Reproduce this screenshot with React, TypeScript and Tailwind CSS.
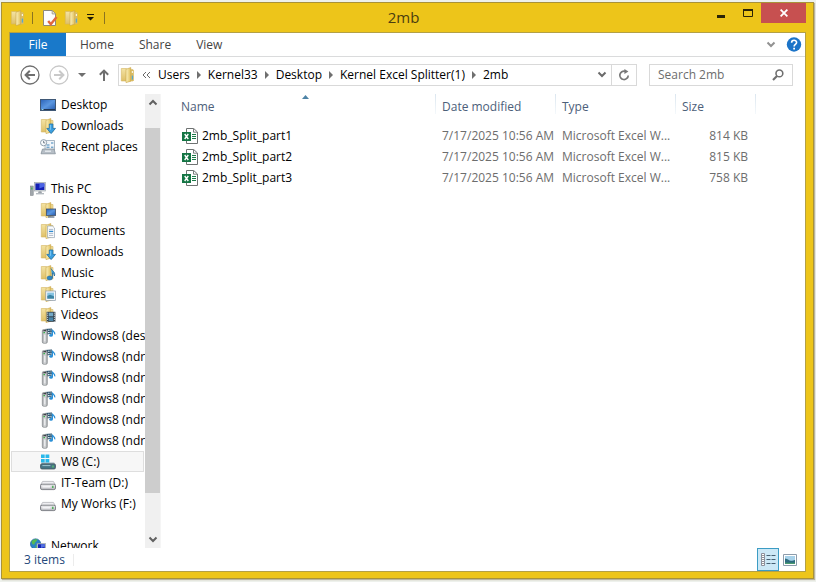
import React from "react";

type IconProps = { className?: string };

// Shared gradients, referenced by id from the icons below
const IconDefs = () => (
  <svg className="absolute h-0 w-0" aria-hidden="true">
    <defs>
      <linearGradient id="folderBack" x1="0" y1="0" x2="0" y2="1">
        <stop offset="0" stopColor="#f3e3a4" />
        <stop offset="1" stopColor="#dfc067" />
      </linearGradient>
      <linearGradient id="folderFront" x1="0" y1="0" x2="1" y2="0">
        <stop offset="0" stopColor="#fcf2bd" />
        <stop offset="1" stopColor="#e0bf5c" />
      </linearGradient>
      <linearGradient id="screenBlue" x1="0" y1="0" x2="1" y2="1">
        <stop offset="0" stopColor="#2a62b8" />
        <stop offset="0.5" stopColor="#5b97e0" />
        <stop offset="1" stopColor="#2458ac" />
      </linearGradient>
      <linearGradient id="driveBody" x1="0" y1="0" x2="0" y2="1">
        <stop offset="0" stopColor="#f4f4f6" />
        <stop offset="1" stopColor="#b4b5ba" />
      </linearGradient>
      <linearGradient id="tower" x1="0" y1="0" x2="1" y2="0">
        <stop offset="0" stopColor="#a0a3a6" />
        <stop offset="0.5" stopColor="#dcdee0" />
        <stop offset="1" stopColor="#a0a3a6" />
      </linearGradient>
    </defs>
  </svg>
);

const Svg = ({ className = "", children }: IconProps & { children: React.ReactNode }) => (
  <svg viewBox="0 0 16 16" aria-hidden="true" className={`h-4 w-4 shrink-0 ${className}`}>
    {children}
  </svg>
);

const Folder = ({ className, children }: IconProps & { children?: React.ReactNode }) => (
  <Svg className={className}>
    <path d="M1.300 1.500h5l1 1H13v11.500H1.300z" fill="url(#folderBack)" stroke="#d3b662" strokeWidth=".6" />
    <path d="M6 2.200 10.800.6v13.600L6 15.600z" fill="url(#folderFront)" stroke="#c9a548" strokeWidth=".6" />
    {children}
  </Svg>
);

const PlainFolder = ({ className }: IconProps) => (
  <Folder className={className}>
    <path d="M10.900 3h2.800v11h-2.800z" fill="#d9bb62" />
    <path d="M12.400 8.600v4" stroke="#5aa8c8" strokeWidth="1.300" />
    <path d="M12.400 4v2" stroke="#f8f3dc" strokeWidth="1.200" />
  </Folder>
);

const DownloadsIcon = () => (
  <Folder>
    <path d="M9.3 6h3.6v4.4h2.6L11.1 15.6 6.8 10.4h2.5z" fill="#3b9fe0" stroke="#1c6fa8" strokeWidth=".8" />
    <path d="M10.4 6.8v5" stroke="#7cc8f4" />
  </Folder>
);

const FolderDesktopIcon = () => (
  <Folder>
    <rect x="6.4" y="7" width="9.2" height="6.4" fill="url(#screenBlue)" stroke="#40516b" strokeWidth=".8" />
    <path d="M8 15h6.4" stroke="#54677f" strokeWidth="1.2" />
  </Folder>
);

const DocumentsIcon = () => (
  <Folder>
    <path d="M7.6 3h4.8l2.1 2v9.6H7.6z" fill="#fafcfe" stroke="#94a4b4" strokeWidth=".7" />
    <path d="M9 6.4h4.2M9 10.4h4.2M9 12.4h4.2" stroke="#9aabbc" strokeWidth=".8" />
    <path d="M9 8.4h4.2" stroke="#2d8ad0" strokeWidth="1.3" />
  </Folder>
);

const MusicIcon = () => (
  <Folder>
    <path d="M11 3.4c.5 2.4 4.8 3 3.4 7.6-.2-1.8-1-2.6-2-3v4.9" fill="#3c9bd4" stroke="#21689c" strokeWidth=".8" />
    <ellipse cx="9.7" cy="13" rx="2.7" ry="2" fill="#2e87c4" stroke="#21689c" strokeWidth=".6" />
  </Folder>
);

const PicturesIcon = () => (
  <Folder>
    <rect x="5.8" y="5" width="9.6" height="9.4" fill="#f6f8fa" stroke="#8b9aa8" strokeWidth=".7" />
    <path d="M7.2 6.6H14v3.6H7.2z" fill="#86c3e2" />
    <path d="M7.2 10 10 8.8l4 1.4v2.6H7.2z" fill="#3b84a4" />
  </Folder>
);

const VideosIcon = () => (
  <Folder>
    <rect x="6.6" y="4.8" width="8.8" height="10" fill="#33414c" />
    <rect x="8.7" y="5.6" width="4.5" height="3.7" fill="#73a9c7" />
    <rect x="8.7" y="10.3" width="4.5" height="3.7" fill="#4986aa" />
    <path d="M7.6 5.6v9M14.4 5.6v9" stroke="#dfe8ee" strokeWidth=".9" strokeDasharray="1.1 1" />
  </Folder>
);

const DesktopIcon = () => (
  <Svg>
    <rect x=".5" y="2.5" width="15" height="11" fill="url(#screenBlue)" stroke="#3f5876" />
    <path d="M1 12.5h14" stroke="#1f3554" />
    <path d="M1.5 12.5h2" stroke="#8fd0f0" />
  </Svg>
);

const RecentIcon = () => (
  <Svg>
    <path d="M5 1.5h9.5V11H5z" fill="#f1f5f9" stroke="#93a4b4" strokeWidth=".8" />
    <path d="M6.5 6h3M6.5 8.2h3M11 4h2.4M11 8.2h2.4" stroke="#3f84b8" />
    <path d="M2.5 10h11.5l1.4 4.8H1z" fill="#b6bec6" stroke="#7d8994" strokeWidth=".7" />
    <path d="M5 12.2h6" stroke="#eef2f5" strokeWidth="1.2" />
    <circle cx="3.6" cy="3.7" r="3.1" fill="#f9fbfd" stroke="#8796a5" strokeWidth=".9" />
    <path d="M3.6 1.8v2.1h1.6" fill="none" stroke="#566472" strokeWidth=".8" />
  </Svg>
);

const ThisPcIcon = () => (
  <Svg>
    <rect x=".4" y="5" width="2.8" height="9.4" fill="#a0a6ab" stroke="#72787e" strokeWidth=".5" />
    <path d="M1.8 6.4v2" stroke="#36b54a" strokeWidth="1.2" />
    <rect x="4.4" y="1.4" width="11" height="8.6" fill="#d5dade" stroke="#a2a9b0" strokeWidth=".7" />
    <rect x="5.4" y="2.4" width="9" height="6.6" fill="#1420b4" />
    <path d="M9.4 2.4h5v3.2l-5 2z" fill="#4a63e6" />
    <path d="M8.6 10.2h2.8l.6 2H8z" fill="#9ba1a8" />
    <path d="M6 12.7h8" stroke="#b4bac0" strokeWidth="1.4" />
  </Svg>
);

const MediaDeviceIcon = () => (
  <Svg>
    <path d="M4.6 1 12 .4v5.200l-5 .8z" fill="#27506c" />
    <path d="M8 2.200h1.6M10.4 2h1.2M8 4.600h1.6M10.4 4.400h1.2" stroke="#d9e9f2" strokeWidth="1.1" />
    <rect x="2.300" y="1.500" width="5" height="13.800" rx="1.4" fill="url(#tower)" stroke="#85898c" strokeWidth=".7" />
    <path d="M3.4 2.7h2.8" stroke="#2e3338" strokeWidth="1.2" />
    <path d="M3.4 4.7h1.6" stroke="#38b04c" strokeWidth="1.2" />
    <path d="M4.8 7v6" stroke="#f2f3f4" strokeWidth="1" />
    <path d="M12.4 1.600v5.600M12.4 2c.4 1.4 2.8 1.8 2.400 4.400" fill="none" stroke="#2a8fd6" strokeWidth="1.200" />
    <ellipse cx="11" cy="7.400" rx="1.800" ry="1.300" fill="#2a8fd6" />
  </Svg>
);

const DriveIcon = () => (
  <Svg>
    <path d="M2.6 6.4h10.8l2 3.4H.6z" fill="#eeeef1" stroke="#a9aab0" strokeWidth=".7" />
    <rect x=".5" y="9.2" width="15" height="5.4" rx="1.6" fill="url(#driveBody)" stroke="#77797f" strokeWidth=".9" />
    <path d="M2.4 11.8h8" stroke="#f7f7f9" strokeWidth="1.4" />
    <path d="M12.8 10.8v2.2" stroke="#3fa94b" strokeWidth="1.3" />
  </Svg>
);

const SystemDriveIcon = () => (
  <Svg>
    <path d="M2 8h12l1.4 2.6H.6z" fill="#c8d4da" />
    <rect x=".5" y="9.8" width="15" height="5.2" rx="1.5" fill="#477484" stroke="#46565e" strokeWidth=".8" />
    <path d="M2.4 11.6h8" stroke="#9fc4d0" />
    <path d="M13 11.4v2" stroke="#5fd468" strokeWidth="1.2" />
    <path d="M1 .4h3.7v3.7H1zM5.5.4h3.8v3.7H5.5zM1 4.9h3.7v3.7H1zM5.5 4.9h3.8v3.7H5.5z" fill="#28b8ea" />
  </Svg>
);

const NetworkIcon = () => (
  <Svg>
    <circle cx="5.6" cy="6" r="5.2" fill="#2c83c6" stroke="#1d5e93" strokeWidth=".6" />
    <path d="M1.6 3.4C3.4 1.4 6 1 7.4 1.6 7 3.6 4.6 4 4.4 6.4 3 7 1.6 5.4 1.6 3.4M5.6 8l2-1.6v4.2c-1 .6-2 .2-2-2.6" fill="#57bb52" />
    <rect x="7" y="5.4" width="8.6" height="7" fill="#d5dade" stroke="#8a939c" strokeWidth=".6" />
    <rect x="7.9" y="6.2" width="6.9" height="5.2" fill="#1626b4" />
    <path d="M11 6.2h3.8v2.6L11 10z" fill="#5270e2" />
    <path d="M8.4 13.8h6" stroke="#9ba3aa" strokeWidth="1.4" />
  </Svg>
);

const ExcelIcon = () => (
  <Svg>
    <path d="M4.5.5h7.200L15.500 4v11.500h-11z" fill="#fff" stroke="#6e7272" strokeWidth="1" />
    <path d="M11.5.8v3.4h3.6" fill="none" stroke="#6e7272" strokeWidth=".9" />
    <path d="M10 6.500h4M10 8.500h4M10 10.500h4" stroke="#1b7b48" />
    <rect x="0" y="4" width="9" height="9" fill="#147544" />
    <path d="m2.7 6 3.6 5M6.3 6l-3.6 5" stroke="#fff" strokeWidth="1.4" />
  </Svg>
);

const PropertiesIcon = () => (
  <Svg>
    <path d="M1.5.5h8.8l3.2 3.3v11.7h-12z" fill="#fdfdfd" stroke="#8e8a78" />
    <path d="M10.2.6v3.3h3.2" fill="none" stroke="#a09c8a" />
    <path d="m6.2 11 2.6 3.2L14.6 7" fill="none" stroke="#e2683e" strokeWidth="2.4" />
  </Svg>
);

const Chevron = ({ className = "", up = false }: IconProps & { up?: boolean }) => (
  <svg viewBox="0 0 10 7" aria-hidden="true" className={`h-[7px] w-[10px] shrink-0 ${className}`}>
    <path d={up ? "M1.5 5.5 5 2l3.5 3.5" : "M1.5 1.5 5 5l3.5-3.5"} fill="none" stroke="currentColor" strokeWidth="2" />
  </svg>
);

const ArrowCircle = ({ className = "", forward = false }: IconProps & { forward?: boolean }) => (
  <svg viewBox="0 0 20 20" aria-hidden="true" className={`h-5 w-5 ${className}`}>
    <circle cx="10" cy="10" r="9" fill="none" stroke="currentColor" strokeWidth="1.3" />
    <path
      d={forward ? "M5 10h9M10.2 5.8 14.4 10l-4.2 4.2" : "M15 10H6M9.8 5.8 5.6 10l4.2 4.2"}
      fill="none"
      stroke="currentColor"
      strokeWidth="2"
    />
  </svg>
);

type NavItem = { label: string; icon: React.ReactNode; root?: boolean; selected?: boolean };

const navGroups: NavItem[][] = [
  [
    { label: "Desktop", icon: <DesktopIcon /> },
    { label: "Downloads", icon: <DownloadsIcon /> },
    { label: "Recent places", icon: <RecentIcon /> },
  ],
  [
    { label: "This PC", icon: <ThisPcIcon />, root: true },
    { label: "Desktop", icon: <FolderDesktopIcon /> },
    { label: "Documents", icon: <DocumentsIcon /> },
    { label: "Downloads", icon: <DownloadsIcon /> },
    { label: "Music", icon: <MusicIcon /> },
    { label: "Pictures", icon: <PicturesIcon /> },
    { label: "Videos", icon: <VideosIcon /> },
    { label: "Windows8 (desk", icon: <MediaDeviceIcon /> },
    { label: "Windows8 (ndrv", icon: <MediaDeviceIcon /> },
    { label: "Windows8 (ndrv", icon: <MediaDeviceIcon /> },
    { label: "Windows8 (ndrv", icon: <MediaDeviceIcon /> },
    { label: "Windows8 (ndrv", icon: <MediaDeviceIcon /> },
    { label: "Windows8 (ndrv", icon: <MediaDeviceIcon /> },
    { label: "W8 (C:)", icon: <SystemDriveIcon />, selected: true },
    { label: "IT-Team (D:)", icon: <DriveIcon /> },
    { label: "My Works (F:)", icon: <DriveIcon /> },
  ],
  [{ label: "Network", icon: <NetworkIcon />, root: true }],
];

const crumbs = ["Users", "Kernel33", "Desktop", "Kernel Excel Splitter(1)", "2mb"];

const files = [
  { name: "2mb_Split_part1", date: "7/17/2025 10:56 AM", type: "Microsoft Excel W...", size: "814 KB" },
  { name: "2mb_Split_part2", date: "7/17/2025 10:56 AM", type: "Microsoft Excel W...", size: "815 KB" },
  { name: "2mb_Split_part3", date: "7/17/2025 10:56 AM", type: "Microsoft Excel W...", size: "758 KB" },
];

const TitleBar = () => (
  <header className="relative flex h-[29px] shrink-0 items-start justify-between">
    <div className="flex h-[29px] items-center pl-2">
      <PlainFolder />
      <span className="ml-[6px] h-3 w-px bg-[#8a7420]" />
      <button aria-label="Properties" className="ml-[9px]"><PropertiesIcon /></button>
      <button aria-label="New folder" className="ml-[6px]"><PlainFolder /></button>
      <button aria-label="Customize toolbar" className="ml-[7px]">
        <svg viewBox="0 0 7 7" className="h-[7px] w-[7px]" aria-hidden="true">
          <path d="M0 0h7v1H0zM0 3h7L3.5 6.5z" fill="#1c1804" />
        </svg>
      </button>
      <span className="ml-[10px] h-3 w-px bg-[#8a7420]" />
    </div>
    <h1 className="pointer-events-none absolute inset-x-0 top-1 pr-2 text-center text-[15px] leading-5 text-[#4a3e10]">2mb</h1>
    <div className="flex pr-[7px]">
      <button aria-label="Minimize" className="flex h-5 w-[27px] items-center justify-center">
        <svg viewBox="0 0 8 12" className="h-3 w-2" aria-hidden="true"><path d="M0 8h8v3H0z" fill="#2b2406" /></svg>
      </button>
      <button aria-label="Maximize" className="flex h-5 w-[27px] items-center justify-center">
        <svg viewBox="0 0 10 8" className="h-2 w-[10px]" aria-hidden="true">
          <path d="M.5 1h9v6.5h-9z" fill="none" stroke="#2b2406" />
          <path d="M0 0h10v2H0z" fill="#2b2406" />
        </svg>
      </button>
      <button aria-label="Close" className="flex h-5 w-[45px] items-center justify-center bg-[#c75050]">
        <svg viewBox="0 0 8 8" className="h-2 w-2" aria-hidden="true">
          <path d="m.6.6 6.8 6.8M7.4.6.6 7.4" stroke="#fff" strokeWidth="1.8" />
        </svg>
      </button>
    </div>
  </header>
);

const Ribbon = () => (
  <div className="flex h-6 shrink-0 items-center border-b border-[#dadbdc] text-[#444]">
    <button className="h-full w-14 self-stretch bg-[#1979ca] text-white">File</button>
    <div className="flex gap-[25px] pt-px pl-[14px]">
      <button>Home</button>
      <button>Share</button>
      <button>View</button>
    </div>
    <button aria-label="Expand the Ribbon" className="ml-auto text-[#929292]"><Chevron /></button>
    <button aria-label="Help" className="mr-[3px] ml-[10px]">
      <svg viewBox="0 0 16 16" className="h-4 w-4" aria-hidden="true">
        <circle cx="8" cy="7.500" r="7.200" fill="#1c74c8" />
        <path d="M5.6 5.700c0-3.2 5-3.1 5-.2 0 1.9-2.5 1.9-2.5 4" fill="none" stroke="#fff" strokeWidth="1.6" />
        <path d="M7.2 10.700h1.8v1.7H7.2z" fill="#fff" />
      </svg>
    </button>
  </div>
);

const AddressBar = () => (
  <div className="flex h-[37px] shrink-0 items-center pr-3 pb-[2px] pl-[10px]">
    <button aria-label="Back" className="text-[#6f6f6f]"><ArrowCircle /></button>
    <button aria-label="Forward" className="ml-[9px] text-[#c9c9c9]"><ArrowCircle forward /></button>
    <button aria-label="Recent locations" className="ml-[9px]">
      <svg viewBox="0 0 8 4" className="h-1 w-2" aria-hidden="true"><path d="M0 0h8L4 4z" fill="#6f6f6f" /></svg>
    </button>
    <button aria-label="Up" className="ml-3">
      <svg viewBox="0 0 12 12" className="h-3 w-3" aria-hidden="true">
        <path d="M6 12V1.5M1.8 5.8 6 1.6l4.2 4.2" fill="none" stroke="#6f6f6f" strokeWidth="2" />
      </svg>
    </button>
    <div className="ml-2 flex h-[22px] min-w-0 flex-1 items-center border border-[#d9d9d9]">
      <PlainFolder className="ml-px" />
      <svg viewBox="0 0 9 8" className="ml-[6px] h-2 w-[9px] shrink-0" aria-hidden="true">
        <path d="M4 1 1 4l3 3M8 1 5 4l3 3" fill="none" stroke="#6a6a6a" />
      </svg>
      <nav aria-label="Path" className="flex min-w-0 flex-1 items-center overflow-hidden pl-[7px] whitespace-nowrap text-black">
        {crumbs.map((crumb, index) => (
          <React.Fragment key={crumb}>
            {index > 0 && (
              <svg viewBox="0 0 4 8" className="mx-[7px] h-2 w-1 shrink-0" aria-hidden="true">
                <path d="M0 0v8l4-4z" fill="#6f6f6f" />
              </svg>
            )}
            <a href="#">{crumb}</a>
          </React.Fragment>
        ))}
      </nav>
      <button aria-label="Previous locations" className="mr-1 text-[#6a6a6a]"><Chevron /></button>
      <button aria-label="Refresh" className="flex h-full w-[25px] items-center justify-center border-l border-[#d9d9d9]">
        <svg viewBox="0 0 12 12" className="h-3 w-3" aria-hidden="true">
          <path d="M7.2 2.3A4.2 4.2 0 1 0 10.2 6.4" fill="none" stroke="#777" strokeWidth="1.7" />
          <path d="M6.4 0v5L10.4 2.4z" fill="#777" />
        </svg>
      </button>
    </div>
    <label className="ml-3 flex h-[22px] w-36 shrink-0 items-center border border-[#d9d9d9] pr-2 pl-2">
      <input
        type="search"
        aria-label="Search 2mb"
        placeholder="Search 2mb"
        className="min-w-0 flex-1 bg-transparent outline-none placeholder:text-[#6d6d6d]"
      />
      <svg viewBox="0 0 12 12" className="h-3 w-3 shrink-0" aria-hidden="true">
        <circle cx="7.4" cy="4.4" r="3.4" fill="none" stroke="#6f6f6f" strokeWidth="1.6" />
        <path d="M5 7 1 11" stroke="#6f6f6f" strokeWidth="2.2" />
      </svg>
    </label>
  </div>
);

const Sidebar = () => (
  <div className="flex w-[151px] shrink-0 border-r border-[#f5f5f5]">
    <nav aria-label="Folders" className="flex min-w-0 flex-1 flex-col gap-[21px] overflow-hidden pl-px">
      {navGroups.map((group, groupIndex) => (
        <ul key={groupIndex}>
          {group.map((item, index) => (
            <li key={index}>
              <a
                href="#"
                className={`mr-px flex h-[21px] items-center gap-[5px] border whitespace-nowrap text-black ${
                  item.root ? "pl-[18px]" : "pl-7"
                } ${item.selected ? "border-[#dedede] bg-[#f7f7f7]" : "border-transparent"}`}
              >
                {item.icon}
                {item.label}
              </a>
            </li>
          ))}
        </ul>
      ))}
    </nav>
    <div className="flex w-[15px] shrink-0 flex-col bg-[#f0f0f0] text-[#606060]">
      <button aria-label="Scroll up" className="flex h-[17px] items-center justify-center"><Chevron up /></button>
      <div className="flex min-h-0 flex-1 flex-col">
        <div className="h-[4%]" />
        <div className="h-[87%] bg-[#cdcdcd]" />
      </div>
      <button aria-label="Scroll down" className="flex h-[17px] items-center justify-center"><Chevron /></button>
    </div>
  </div>
);

const columnRule = "relative h-[25px] bg-[linear-gradient(#dbe6ef,#f4f8fb)] bg-[length:1px_20px] bg-right-top bg-no-repeat font-normal";

const FileList = () => (
  <main className="min-w-0 flex-1 overflow-hidden pl-[15px]">
    <table className="w-[580px] table-fixed border-collapse text-left whitespace-nowrap text-[#6d6d6d]">
      <colgroup>
        <col className="w-[260px]" />
        <col className="w-[120px]" />
        <col className="w-[120px]" />
        <col className="w-[80px]" />
      </colgroup>
      <thead className="text-[#4c607a]">
        <tr>
          <th className={`${columnRule} pl-[5px]`}>
            Name
            <svg viewBox="0 0 7 4" className="absolute top-px left-[126px] h-1 w-[7px]" aria-hidden="true">
              <path d="M0 4h7L3.5 0z" fill="#4d83a6" />
            </svg>
          </th>
          <th className={`${columnRule} pl-[6px]`}>Date modified</th>
          <th className={`${columnRule} pl-[6px]`}>Type</th>
          <th className={`${columnRule} pl-[6px]`}>Size</th>
        </tr>
      </thead>
      <tbody className="before:block before:h-[6px]">
        {files.map((file) => (
          <tr key={file.name} className="h-[21px]">
            <td className="pl-[6px]">
              <span className="flex items-center gap-1 text-black">
                <ExcelIcon />
                {file.name}
              </span>
            </td>
            <td className="pl-[6px]">{file.date}</td>
            <td className="pl-[6px]">{file.type}</td>
            <td className="pr-2 text-right">{file.size}</td>
          </tr>
        ))}
      </tbody>
    </table>
  </main>
);

const StatusBar = () => (
  <footer className="flex h-[23px] shrink-0 items-center pr-1 text-[#23487a]">
    <span className="ml-[14px]">3 items</span>
    <span className="ml-2 h-3 w-px bg-[#ececec]" />
    <div className="ml-auto flex h-full items-center">
      <button aria-label="Details view" className="flex h-full w-[22px] items-center justify-center border border-[#3c9cc4] bg-[#cce8f6]">
        <svg viewBox="0 0 16 14" className="h-[14px] w-4" aria-hidden="true">
          <path d="M1.5.5h3v4h-3zM1.5 4.5h3v4h-3zM1.5 8.5h3v4h-3z" fill="#fff" stroke="#8d8f9a" />
          <path d="M2.5 2h1v1h-1zM2.5 6h1v1h-1zM2.5 10h1v1h-1z" fill="#333" />
          <path d="M6.5 2.5h4M11.5 2.5h4M6.5 6.5h4M11.5 6.5h4M6.5 10.5h4M11.5 10.5h4" stroke="#466073" />
        </svg>
      </button>
      <button aria-label="Large icons view" className="flex h-full w-[22px] items-center justify-center">
        <svg viewBox="0 0 14 12" className="h-3 w-[14px]" aria-hidden="true">
          <path d="M.5.5h13v11H.5z" fill="#fff" stroke="#8d9cab" />
          <path d="M2 2h10v8H2z" fill="#a8d2ea" />
          <path d="M2 4.4c3 .2 4 2.4 6 2.4 1.8 0 3-1 4-.8V10H2z" fill="#2d6b7e" />
          <path d="M2 8.4c3 .6 6 .2 10 .4V10H2z" fill="#4a9a70" />
        </svg>
      </button>
    </div>
  </footer>
);

const App: React.FC = () => {
  return (
    <div className="flex h-screen flex-col bg-[#eef1ec] pt-[2px] pr-[2px] pb-[3px] pl-px font-['Open_Sans','Noto_Sans',sans-serif] text-[12px] leading-4">
      <IconDefs />
      <div className="flex min-h-0 flex-1 flex-col border border-[#a8923a] bg-[#edc51a] shadow-[1px_1px_1px_#b9b49c]">
        <TitleBar />
        <div className="mx-[7px] mb-[6px] flex min-h-0 flex-1 flex-col border border-[#b3a045] bg-white">
          <Ribbon />
          <AddressBar />
          <div className="flex min-h-0 flex-1">
            <Sidebar />
            <FileList />
          </div>
          <StatusBar />
        </div>
      </div>
    </div>
  );
};

export default App;
